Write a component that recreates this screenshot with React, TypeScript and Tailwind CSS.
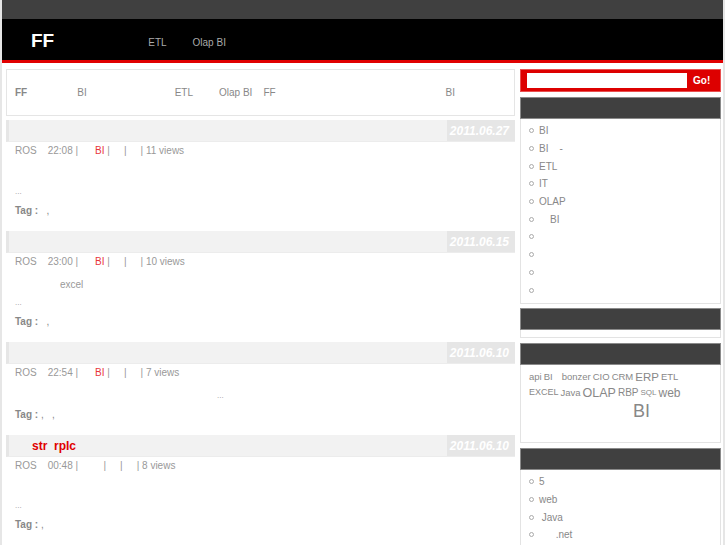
import React from "react";

const Bullet = () => (
  <span className="inline-block w-[5px] h-[5px] rounded-full border border-[#aaa] mr-[5px] ml-[8px] shrink-0" />
);

const ListBox = ({ items }: { items: React.ReactNode[] }) => (
  <div className="border border-t-0 border-[#e3e3e3] pt-[3px] pb-[4px]">
    {items.map((it, i) => (
      <div key={i} className="h-[17.7px] flex items-center text-[10px] text-[#888]">
        <Bullet />
        <span className="whitespace-pre">{it}</span>
      </div>
    ))}
  </div>
);

const WidgetHead = () => <div className="h-[22px] bg-[#404040] border border-[#8a8a8a]" />;

type PostProps = {
  title?: React.ReactNode;
  date: string;
  time: string;
  views: string;
  cat?: boolean;
  children: React.ReactNode;
  tags: string;
  mb: string;
};

const Post = ({ title, date, time, views, cat = true, children, tags, mb }: PostProps) => (
  <div className={mb}>
    <div className="h-[22px] flex bg-[#f2f2f2] border-l-[3px] border-[#e6e6e6] border-b border-b-[#ececec]">
      <div className="flex-1 flex items-center pl-[23px] text-[12px] font-bold text-[#e00000]">{title}</div>
      <div className="w-[68px] bg-[#e6e6e6] flex items-center justify-end pr-[6px] text-[12px] italic font-bold text-white">
        {date}
      </div>
    </div>
    <div className="h-[17px] flex items-center pl-[9px] text-[10px] text-[#999] whitespace-pre">
      <span>ROS</span>
      <span className="ml-[11px]">{time} |</span>
      <span className="ml-[17px] text-[#e8353b]">{cat ? "BI" : "  "}</span>
      <span> |</span>
      <span className="ml-[14px]">|</span>
      <span className="ml-[14px]">| {views} views</span>
    </div>
    <div className="mt-[5px] pl-[9px] text-[10px] text-[#999]">{children}</div>
    <div className="h-[18px] flex items-center pl-[9px] text-[10px] text-[#888] whitespace-pre">
      <span className="font-bold">Tag :</span>
      <span>{tags}</span>
    </div>
  </div>
);

export default function App() {
  return (
    <div className="w-[725px] min-h-[545px] border-x-2 border-[#e6e6e6] bg-white font-['Liberation_Sans',Arial,sans-serif]">
      <div className="h-[19px] bg-[#404040]" />
      <div className="h-[41px] bg-black flex items-center">
        <span className="ml-[29px] text-[19px] font-bold text-white leading-none mt-[2px]">FF</span>
        <span className="ml-[94px] text-[10px] text-[#aaa] mt-[6px]">ETL</span>
        <span className="ml-[26px] text-[10px] text-[#aaa] mt-[6px]">Olap BI</span>
      </div>
      <div className="h-[3px] bg-[#e00000]" />
      <div className="flex pt-[6px] pl-[4px]">
        <div className="w-[509px]">
          <div className="h-[47px] border border-[#e5e5e5] flex items-center text-[10px] text-[#888] whitespace-pre">
            <span className="ml-[8px] font-bold">FF</span>
            <span className="ml-[50px]">BI</span>
            <span className="ml-[88px]">ETL</span>
            <span className="ml-[26px]">Olap BI</span>
            <span className="ml-[11px]">FF</span>
            <span className="ml-[170px]">BI</span>
          </div>
          <div className="h-[4px]" />
          <Post date="2011.06.27" time="22:08" views="11" tags="   ," mb="mb-[12px]">
            <div className="h-[19px]" />
            <div className="h-[18px] flex items-center text-[8px]">...</div>
          </Post>
          <Post date="2011.06.15" time="23:00" views="10" tags="   ," mb="mb-[12px]">
            <div className="h-[19px] flex items-center pl-[45px]">excel</div>
            <div className="h-[18px] flex items-center text-[8px]">...</div>
          </Post>
          <Post date="2011.06.10" time="22:54" views="7" tags=" ,   ," mb="mb-[12px]">
            <div className="h-[19px] flex items-center pl-[202px] text-[8px]">...</div>
          </Post>
          <Post
            title={<span className="whitespace-pre">str  rplc</span>}
            date="2011.06.10"
            time="00:48"
            views="8"
            cat={false}
            tags=" ,"
            mb="mb-[12px]"
          >
            <div className="h-[18px]" />
            <div className="h-[18px] flex items-center text-[8px]">...</div>
          </Post>
        </div>
        <div className="w-[201px] ml-[5px]">
          <div className="h-[23px] bg-[#dd0000] border border-[#e85050] flex items-center pl-[6px]">
            <div className="w-[160px] h-[15px] bg-white" />
            <span className="ml-[6px] text-[10px] font-bold text-white">Go!</span>
          </div>
          <div className="h-[5px]" />
          <WidgetHead />
          <ListBox items={["BI", "BI    -", "ETL", "IT", "OLAP", "    BI", "", "", "", ""]} />
          <div className="h-[4px]" />
          <WidgetHead />
          <div className="h-[8px] border border-t-0 border-[#e3e3e3]" />
          <div className="h-[5px]" />
          <WidgetHead />
          <div className="h-[78px] border border-t-0 border-[#e3e3e3] pl-[8px] pt-[5px] text-[#888] whitespace-pre">
            <div className="h-[15px] flex items-center gap-[2px]">
              <span className="text-[9.5px]">api</span>
              <span className="text-[9.5px]">BI</span>
              <span className="text-[9.5px] ml-[7px]">bonzer</span>
              <span className="text-[9.5px]">CIO</span>
              <span className="text-[9.5px]">CRM</span>
              <span className="text-[11.5px]">ERP</span>
              <span className="text-[9.5px]">ETL</span>
            </div>
            <div className="h-[16px] flex items-center gap-[2px]">
              <span className="text-[9px]">EXCEL</span>
              <span className="text-[9.5px]">Java</span>
              <span className="text-[12.5px]">OLAP</span>
              <span className="text-[10px]">RBP</span>
              <span className="text-[8px]">SQL</span>
              <span className="text-[12px]">web</span>
            </div>
            <div className="h-[22px] flex items-center pl-[104px]">
              <span className="text-[18px]">BI</span>
            </div>
          </div>
          <div className="h-[5px]" />
          <WidgetHead />
          <ListBox items={["5", "web", " Java", "      .net"]} />
        </div>
      </div>
    </div>
  );
}
